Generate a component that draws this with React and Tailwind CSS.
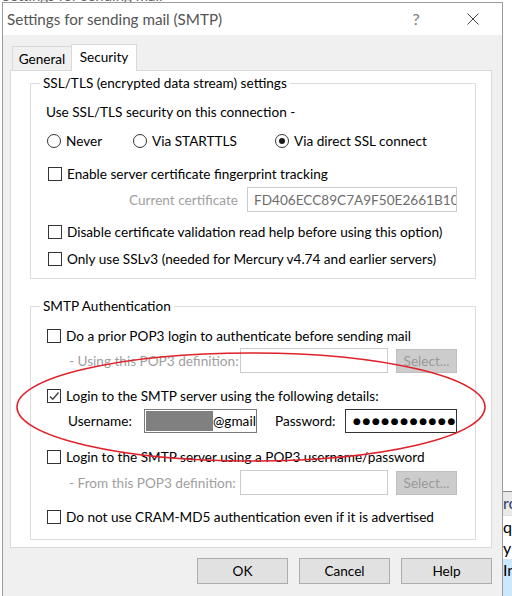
import React from 'react';

const Checkbox = ({ checked }) => (
  <span className="w-[14px] h-[14px] shrink-0 border border-[#333333] bg-white flex items-center justify-center">
    {checked && (
      <svg width="12" height="12" viewBox="0 0 12 12">
        <polyline points="2,6.5 4.8,9.2 10.5,2.5" fill="none" stroke="#404040" strokeWidth="1.4" />
      </svg>
    )}
  </span>
);

const Radio = ({ checked }) => (
  <span className="w-[14px] h-[14px] shrink-0 rounded-full border border-[#333333] bg-white flex items-center justify-center">
    {checked && <span className="w-[6px] h-[6px] rounded-full bg-[#1a1a1a]" />}
  </span>
);

const CheckRow = ({ checked, label, className }) => (
  <div className={`flex items-center h-[16px] gap-[5px] ${className}`}>
    <Checkbox checked={checked} />
    <span className="whitespace-nowrap">{label}</span>
  </div>
);

const DisabledSelect = () => (
  <div className="ml-[8px] w-[61px] h-[24px] bg-[#cccccc] border border-[#bfbfbf] text-[#9a9a9a] flex items-center justify-center">
    Select...
  </div>
);

const PopDefRow = ({ label, className }) => (
  <div className={`flex items-center h-[25px] ${className}`}>
    <span className="w-[209px] pl-[38px] text-[#a0a0a0] whitespace-nowrap">{label}</span>
    <div className="w-[148px] h-[25px] border border-[#cccccc] bg-white" />
    <DisabledSelect />
  </div>
);

export default function App() {
  return (
    <div className="relative w-[512px] h-[596px] overflow-hidden bg-white flex flex-col font-['Lato',sans-serif] text-[13.6px] leading-[16px] text-black">
      {/* window behind, only its lower edge shows */}
      <div className="h-[2px] overflow-hidden shrink-0">
        <div className="-mt-[13px] pl-[2px] text-[15px] text-[#666666] whitespace-nowrap">Settings for sending mail</div>
      </div>

      <div className="flex flex-1 min-h-0">
        <div className="w-[2px] shrink-0 bg-white" />

        {/* dialog */}
        <div className="w-[501px] shrink-0 border-l border-t border-r border-[#9b9b9b] flex flex-col">
          <div className="h-[32px] bg-white flex items-center shrink-0">
            <span className="flex-1 pl-[4px] text-[15.2px] text-[#555555] whitespace-nowrap">Settings for sending mail (SMTP)</span>
            <span className="w-[46px] text-center text-[16px] text-[#777777]">?</span>
            <span className="ml-[11px] mr-[6px] w-[46px] flex justify-center">
              <svg width="12" height="12" viewBox="0 0 12 12">
                <path d="M0.5 0.5 L11.5 11.5 M11.5 0.5 L0.5 11.5" stroke="#444444" strokeWidth="1" />
              </svg>
            </span>
          </div>

          <div className="flex-1 bg-[#f0f0f0] pt-[9px] pl-[7px] pr-[10px] flex flex-col">
            {/* tabs */}
            <div className="flex items-end h-[26px] pl-[2px]">
              <div className="w-[60px] h-[24px] -mr-px border border-b-0 border-[#d9d9d9] bg-[#f0f0f0] flex items-center justify-center">
                General
              </div>
              <div className="relative z-10 -mb-px w-[66px] h-[27px] border border-b-0 border-[#d9d9d9] bg-white flex items-start pt-[4px] justify-center">
                Security
              </div>
            </div>

            {/* tab panel */}
            <div className="border border-[#d9d9d9] bg-white pt-[4px] pb-[7px] pl-[19px] pr-[15px] flex flex-col">
              <fieldset className="border border-[#dcdcdc] pb-[11px] flex flex-col">
                <legend className="ml-[9px] px-[3px] h-[16px]">SSL/TLS (encrypted data stream) settings</legend>
                <div className="mt-[13px] h-[16px] pl-[15px]">Use SSL/TLS security on this connection -</div>
                <div className="mt-[13px] h-[16px] pl-[16px] flex items-center">
                  <div className="w-[86px] flex items-center gap-[5px]">
                    <Radio />
                    <span>Never</span>
                  </div>
                  <div className="w-[142px] flex items-center gap-[5px]">
                    <Radio />
                    <span>Via STARTTLS</span>
                  </div>
                  <div className="flex items-center gap-[5px]">
                    <Radio checked />
                    <span>Via direct SSL connect</span>
                  </div>
                </div>
                <CheckRow className="mt-[17px] pl-[17px]" label="Enable server certificate fingerprint tracking" />
                <div className="mt-[5px] h-[25px] flex items-center">
                  <span className="w-[216px] pr-[9px] text-right text-[#a0a0a0] whitespace-nowrap">Current certificate</span>
                  <div className="w-[210px] h-[25px] border border-[#cccccc] bg-white text-[#6d6d6d] pl-[6px] flex items-center overflow-hidden whitespace-nowrap">
                    FD406ECC89C7A9F50E2661B10953
                  </div>
                </div>
                <CheckRow className="mt-[12px] pl-[17px]" label="Disable certificate validation read help before using this option)" />
                <CheckRow className="mt-[11px] pl-[17px]" label="Only use SSLv3 (needed for Mercury v4.74 and earlier servers)" />
              </fieldset>

              <fieldset className="mt-[19px] border border-[#dcdcdc] pb-[14px] flex flex-col">
                <legend className="ml-[9px] px-[3px] h-[16px]">SMTP Authentication</legend>
                <CheckRow className="mt-[14px] pl-[16px]" label="Do a prior POP3 login to authenticate before sending mail" />
                <PopDefRow className="mt-[4px]" label="- Using this POP3 definition:" />
                <CheckRow checked className="mt-[15px] pl-[16px]" label="Login to the SMTP server using the following details:" />
                <div className="mt-[5px] h-[24px] flex items-center">
                  <span className="w-[113px] pl-[37px]">Username:</span>
                  <div className="w-[113px] h-[24px] border border-[#7a7a7a] bg-white p-[1px] flex items-center overflow-hidden whitespace-nowrap">
                    <span className="w-[67px] h-[20px] shrink-0 bg-[#808080]" />
                    <span>@gmail</span>
                  </div>
                  <span className="ml-[18px] w-[70px]">Password:</span>
                  <div className="w-[112px] h-[24px] border border-[#333333] bg-white pl-[7px] flex items-center overflow-hidden whitespace-nowrap font-['DejaVu_Sans',sans-serif] text-[9px] tracking-[1.6px]">
                    ●●●●●●●●●●●●●●
                  </div>
                </div>
                <CheckRow className="mt-[16px] pl-[16px]" label="Login to the SMTP server using a POP3 username/password" />
                <PopDefRow className="mt-[5px]" label="- From this POP3 definition:" />
                <CheckRow className="mt-[14px] pl-[16px]" label="Do not use CRAM-MD5 authentication even if it is advertised" />
              </fieldset>
            </div>

            {/* buttons */}
            <div className="mt-[10px] flex justify-end gap-[11px]">
              <button className="w-[91px] h-[26px] bg-[#e1e1e1] border border-[#adadad]">OK</button>
              <button className="w-[91px] h-[26px] bg-[#e1e1e1] border border-[#adadad]">Cancel</button>
              <button className="w-[91px] h-[26px] bg-[#e1e1e1] border border-[#adadad]">Help</button>
            </div>
          </div>
        </div>

        {/* another window peeking out on the right */}
        <div className="flex-1 flex flex-col overflow-hidden whitespace-nowrap text-[16px] leading-[22px]">
          <div className="h-[489px] bg-white" />
          <div className="h-[24px] border-t border-[#8a8a8a] bg-[#e9e9e9] text-[#2a3f6a]">ro</div>
          <div className="h-[22px] border-t border-[#dddddd]">qu</div>
          <div className="h-[22px]">y</div>
          <div className="flex-1 bg-[#cce8ff]">In</div>
        </div>
      </div>

      {/* red annotation ellipse drawn over the dialog */}
      <svg className="absolute inset-0 pointer-events-none" width="512" height="596">
        <ellipse cx="251" cy="407" rx="234" ry="54" fill="none" stroke="#e0212b" strokeWidth="1.6" />
      </svg>
    </div>
  );
}
